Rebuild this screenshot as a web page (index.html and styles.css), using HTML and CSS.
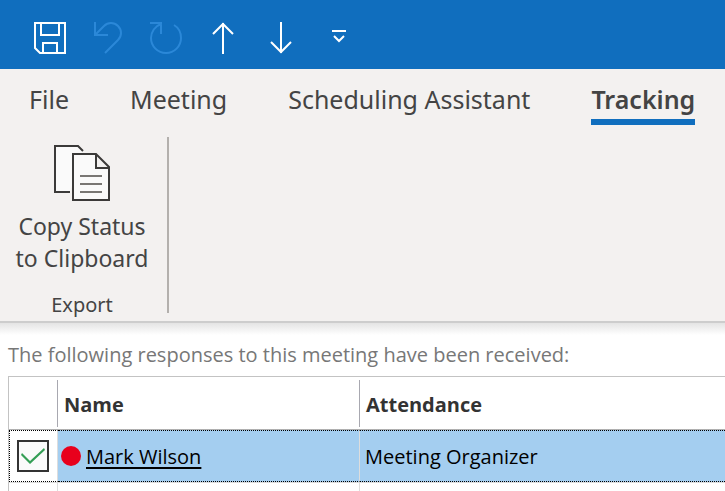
FILE: index.html
```html
<!DOCTYPE html>
<html lang="en">
<head>
<meta charset="utf-8">
<title>Meeting - Tracking</title>
<link rel="stylesheet" href="styles.css">
</head>
<body>
<header class="quick-access">
  <button class="qa-button" aria-label="Save">
    <svg width="32" height="32" viewBox="0 0 32 32"><path d="M1 1H31V31H6L1 26ZM7 1V13H25V1M9 31V21H23V31"/></svg>
  </button>
  <button class="qa-button" aria-label="Undo" disabled>
    <svg width="32" height="32" viewBox="0 0 32 32"><path d="M3 0V13H16M3 13L12 4C16 0 22 0 26 4C30 8 30 14 26 18L13 31"/></svg>
  </button>
  <button class="qa-button" aria-label="Redo" disabled>
    <svg width="32" height="32" viewBox="0 0 32 32"><path d="M0 1H11V12M11 1V2C5 4 1 10 1 16A15 15 0 0 0 31 16C31 11 29 6 24 3"/></svg>
  </button>
  <button class="qa-button" aria-label="Previous item">
    <svg width="32" height="32" viewBox="0 0 32 32"><path d="M15 32V1M5 12L15 2L25 12"/></svg>
  </button>
  <button class="qa-button" aria-label="Next item">
    <svg width="32" height="32" viewBox="0 0 32 32"><path d="M15 0V31M5 20L15 30L25 20"/></svg>
  </button>
  <button class="qa-button" aria-label="Customize toolbar">
    <svg width="32" height="32" viewBox="0 0 32 32"><path d="M8 9H22M10 14L15 19L20 14"/></svg>
  </button>
</header>
<section class="ribbon">
  <nav class="tabs">
    <a class="tab" href="#file">File</a>
    <a class="tab" href="#meeting">Meeting</a>
    <a class="tab" href="#scheduling">Scheduling Assistant</a>
    <a class="tab tab-active" href="#tracking" aria-current="page">Tracking</a>
  </nav>
  <div class="group">
    <button class="copy-button">
      <svg width="56" height="56" viewBox="0 0 56 56">
        <path class="page" d="M16 47H1V1H24L29 6"/>
        <path class="page" d="M19 9H42L55 22V55H19ZM42 9V23H55"/>
        <path class="lines" d="M26 31H48M26 39H48M26 47H48"/>
      </svg>
      <span>Copy Status<br>to Clipboard</span>
    </button>
    <div class="group-label">Export</div>
  </div>
</section>
<main class="content">
  <p class="intro">The following responses to this meeting have been received:</p>
  <table class="responses">
    <thead>
      <tr>
        <th class="col-check" aria-label="Selected"></th>
        <th class="col-name">Name</th>
        <th>Attendance</th>
      </tr>
    </thead>
    <tbody>
      <tr class="selected">
        <td class="check-cell"><input class="check" type="checkbox" aria-label="Mark Wilson" checked></td>
        <td class="name-cell"><div class="person"><span class="status"></span><a href="#mark-wilson">Mark Wilson</a></div></td>
        <td>Meeting Organizer</td>
      </tr>
      <tr class="blank">
        <td></td>
        <td></td>
        <td></td>
      </tr>
    </tbody>
  </table>
</main>
</body>
</html>
```
FILE: styles.css
```css
* {
  box-sizing: border-box;
}

body {
  margin: 0;
  background: #fff;
  color: #444;
  font-family: "Noto Sans", "Open Sans", sans-serif;
  font-size: 20px;
}

button {
  border: 0;
  padding: 0;
  background: none;
  color: inherit;
  font: inherit;
}

svg {
  display: block;
  fill: none;
  stroke-width: 2;
}

.quick-access {
  display: flex;
  padding: 22px 21px 15px;
  background: #106ebe;
}

.qa-button {
  display: flex;
  justify-content: center;
  width: 58px;
  height: 32px;
  stroke: #fff;
}

.qa-button:disabled {
  stroke: #2b88d8;
}

.ribbon {
  padding-bottom: 8px;
  border-bottom: 2px solid #cdcdcd;
  background: #f3f1f0;
}

.tabs {
  display: flex;
  gap: 61px;
  padding: 12px 29px;
}

.tab {
  height: 44px;
  border-bottom: 6px solid transparent;
  color: #444;
  font-size: 25px;
  line-height: 36px;
  text-decoration: none;
  white-space: nowrap;
}

.tab-active {
  border-color: #106ebe;
  font-weight: 600;
}

.group {
  display: flex;
  flex-direction: column;
  justify-content: space-between;
  align-items: center;
  width: 169px;
  height: 176px;
  padding: 8px 3px 0 0;
  border-right: 2px solid #b3b0ad;
}

.copy-button {
  display: flex;
  flex-direction: column;
  align-items: center;
  gap: 9px;
  font-size: 23px;
  line-height: 32px;
}

.page {
  fill: #fafafa;
  stroke: #3b3a39;
}

.lines {
  stroke: #797774;
}

.group-label {
  line-height: 16px;
}

.content {
  padding-left: 8px;
  background: linear-gradient(#e4e4e4, #fff 12px);
  font-family: "Open Sans", "Noto Sans", sans-serif;
}

.intro {
  margin: 0;
  padding: 18px 0 7px;
  color: #777;
  line-height: 28px;
  white-space: nowrap;
}

.responses {
  width: 100%;
  border-top: 1px solid #c3c3c3;
  border-left: 1px solid #c3c3c3;
  border-spacing: 0;
  table-layout: fixed;
  color: #000;
}

.col-check {
  width: 49px;
}

.col-name {
  width: 302px;
}

th {
  height: 53px;
  padding: 2px 6px 0;
  border-bottom: 1px solid #b0b0b0;
  background: linear-gradient(#a8a8b0, #a8a8b0) right 3px / 1px 47px no-repeat;
  color: #333;
  font-weight: 700;
  text-align: left;
}

th:last-child {
  background: none;
}

td {
  padding: 0 5px;
  border-right: 1px solid #ddd;
}

td:last-child {
  border-right: 0;
}

.selected td {
  height: 52px;
  border-top: 1px dotted #000;
  border-bottom: 1px dotted #000;
  background: #a4cef0;
}

.selected .check-cell {
  padding: 0 0 0 7px;
  border-left: 1px dotted #000;
  background: #fff;
}

.selected .name-cell {
  padding-left: 3px;
}

.check {
  display: block;
  width: 32px;
  height: 32px;
  margin: 0;
  border: 2px solid #333;
  background: #fafafa;
  appearance: none;
}

.check:checked::before {
  content: "";
  display: block;
  width: 24px;
  height: 16px;
  margin: 6px 2px;
  background: #349e55;
  clip-path: polygon(0 7px, 1px 5px, 9px 13px, 23px 0, 24px 2px, 9px 16px);
}

.person {
  display: flex;
  align-items: center;
  gap: 5px;
}

.status {
  width: 20px;
  height: 20px;
  border-radius: 50%;
  background: #e8001c;
}

.person a {
  color: #000;
  text-underline-offset: 3px;
}

.blank td {
  height: 9px;
  border-top: 1px solid #ddd;
}
```
